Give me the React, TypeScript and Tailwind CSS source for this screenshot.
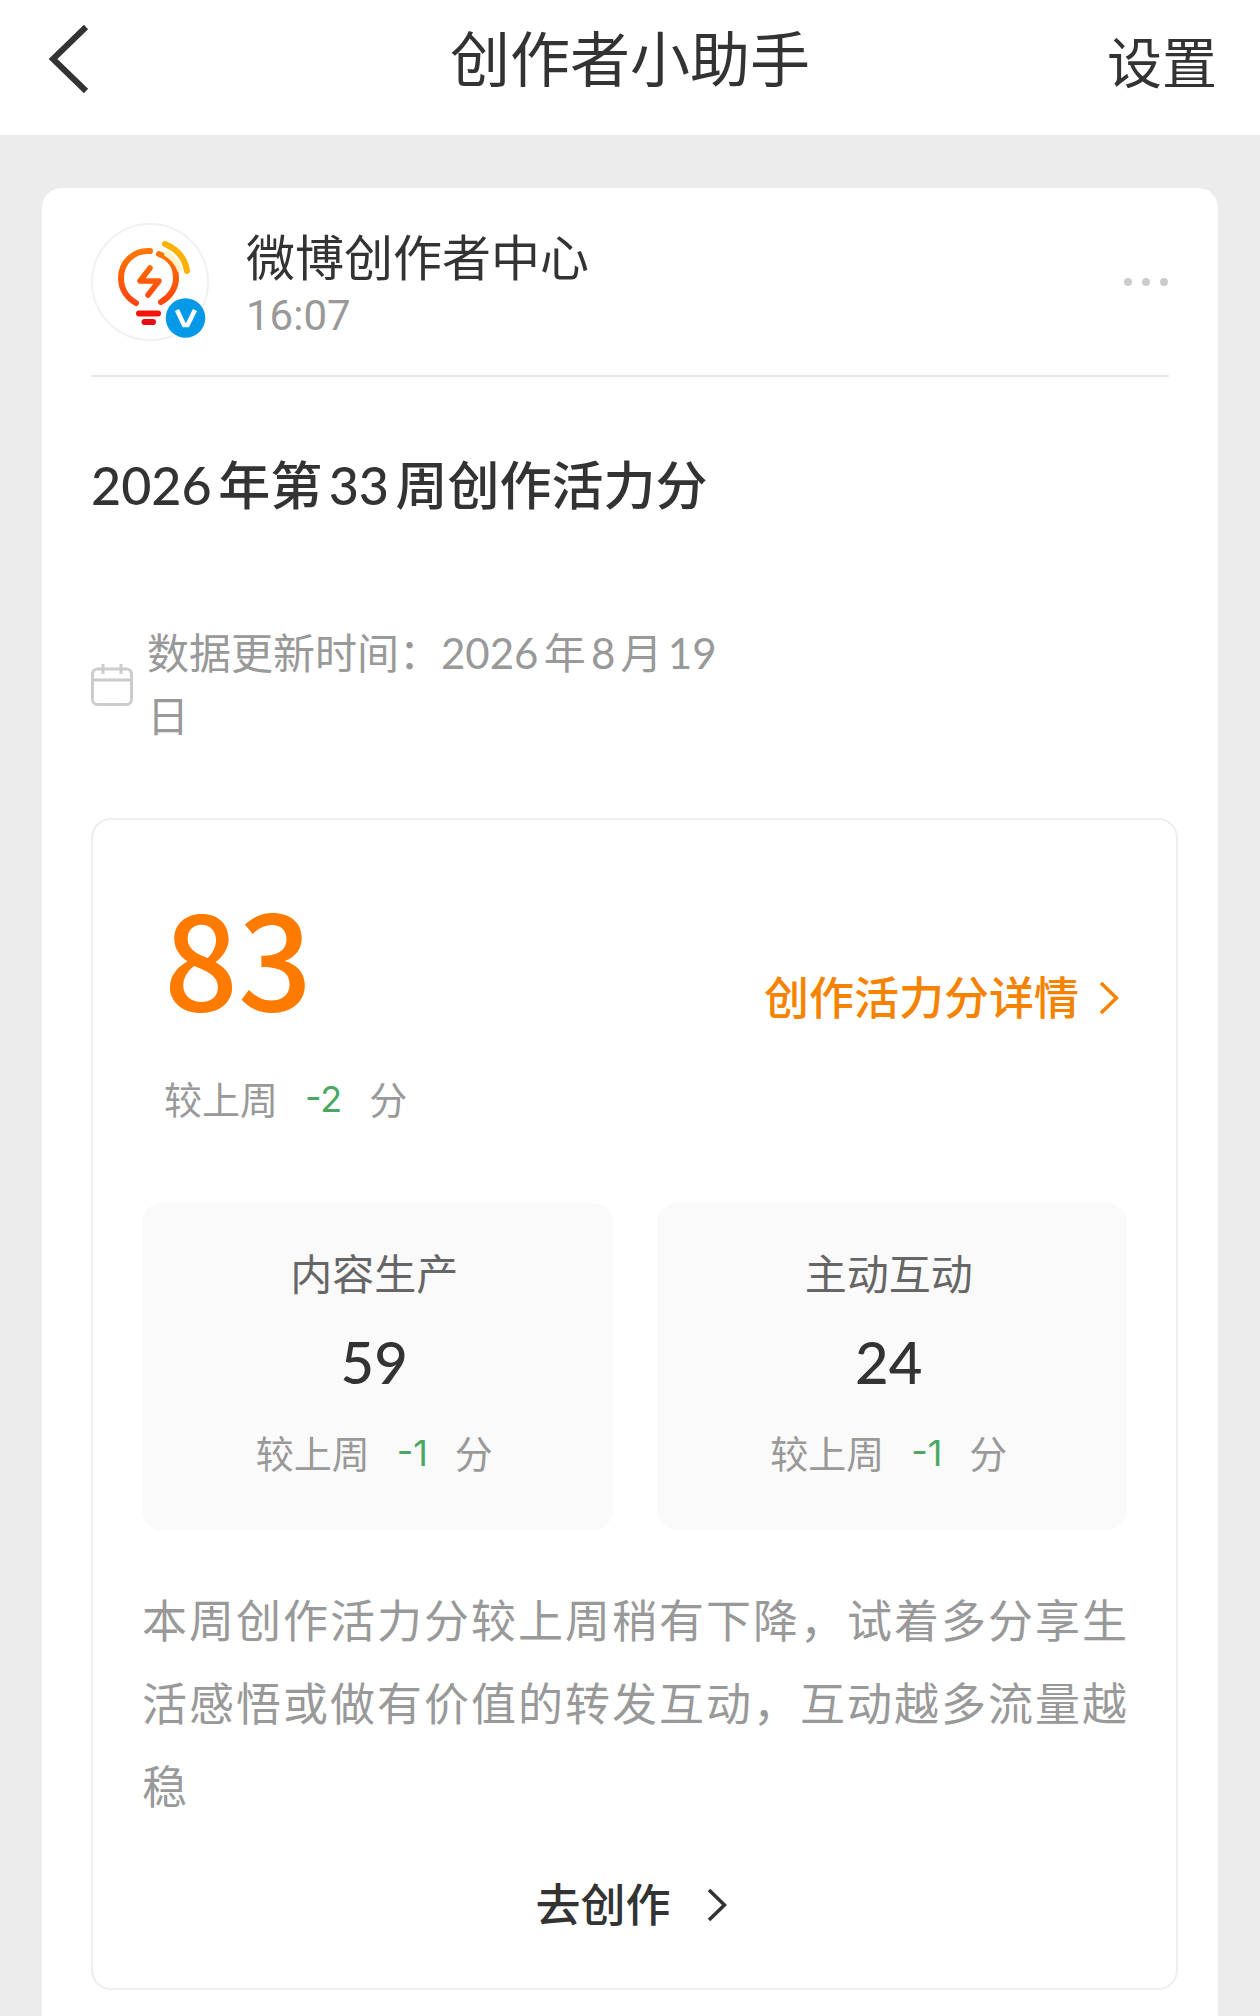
import React from "react";

function ChevronRight({ className }: { className?: string }) {
  return (
    <svg viewBox="0 0 20 34" className={className} fill="none" aria-hidden="true">
      <path d="M2 2 L17.5 17 L2 32" stroke="currentColor" strokeWidth="3.6" />
    </svg>
  );
}

function Avatar() {
  return (
    <svg viewBox="0 0 118 118" className="size-[118px] shrink-0" fill="none" role="img" aria-label="微博创作者中心">
      <defs>
        <linearGradient id="bulb" x1="0" y1="24" x2="0" y2="82" gradientUnits="userSpaceOnUse">
          <stop offset="0" stopColor="#ff7a00" />
          <stop offset="1" stopColor="#ff4310" />
        </linearGradient>
      </defs>
      <circle cx="59" cy="59" r="58" fill="#fff" stroke="#f1f1f1" strokeWidth="2" />
      <g stroke="url(#bulb)" strokeWidth="6" strokeLinecap="round" strokeLinejoin="round">
        <path d="M59 28 C43 27 30 39 30 55 C30 66 36 75 45 80" />
        <path d="M68 31 C79 35 85 44 85 55 C85 65 79 74 70 79" />
        <path d="M59 45 L49 58 L68 58 L57 72" strokeWidth="5.500" />
      </g>
      <path d="M74 30 Q85 36 89 48" stroke="#fff1c9" strokeWidth="5" />
      <path d="M74 21 C86 26 94 35 96 48" stroke="#ffb100" strokeWidth="6" strokeLinecap="round" />
      <path d="M48 90.500 H67" stroke="#f5130c" strokeWidth="6" strokeLinecap="round" />
      <path d="M53.500 99 H62" stroke="#e80d14" strokeWidth="6" strokeLinecap="round" />
      <circle cx="94.500" cy="95" r="21.500" fill="#fff" />
      <circle cx="94.500" cy="95" r="19.800" fill="#0599e8" />
      <path d="M86 87 L93 102 H96.500 L104 87" stroke="#fff" strokeWidth="4.500" />
    </svg>
  );
}

function CalendarIcon() {
  return (
    <svg viewBox="0 0 42 42" className="size-[42px] shrink-0" fill="none" stroke="#cccccc" strokeWidth="3" aria-hidden="true">
      <rect x="1.500" y="5" width="39" height="35.500" rx="5" />
      <path d="M2 16 H40" />
      <path d="M12 0 V10 M30 0 V10" />
    </svg>
  );
}

function Delta({ value }: { value: string }) {
  return (
    <p className="flex gap-[27px] text-[38px] leading-[56px] text-[#999999]">
      <span>较上周</span>
      <span className="font-['Inter'] text-[36px] text-[#4aa862]">{value}</span>
      <span>分</span>
    </p>
  );
}

function StatCard({ label, value, delta }: { label: string; value: string; delta: string }) {
  return (
    <section className="flex flex-col items-center rounded-[20px] bg-[#fafafa] pt-[41px] pr-[6px] pb-[49px]">
      <h3 className="text-[42px] leading-[60px] text-[#666666]">{label}</h3>
      <p className="mt-[18px] text-[58px] leading-[80px] font-medium text-[#333333]">{value}</p>
      <div className="mt-[23px]">
        <Delta value={delta} />
      </div>
    </section>
  );
}

export default function App() {
  return (
    <div
      lang="zh-CN"
      className="flex min-h-screen flex-col bg-[#ececec] font-['Lato','Noto_Sans_CJK_SC',sans-serif] text-[#333333] [text-autospace:normal]"
    >
      <header className="grid h-[135px] grid-cols-[1fr_auto_1fr] items-center bg-white pr-[43px] pb-[18px] pl-[43px]">
        <button type="button" aria-label="返回" className="justify-self-start pl-[5px]">
          <svg viewBox="0 0 42 70" className="h-[70px] w-[42px]" fill="none" aria-hidden="true">
            <path d="M38 3 L5 35 L38 67" stroke="#333333" strokeWidth="6" />
          </svg>
        </button>
        <h1 className="text-[60px] leading-[80px]">创作者小助手</h1>
        <button type="button" className="justify-self-end pt-[6px] text-[55px] leading-[80px]">
          设置
        </button>
      </header>

      <main className="mx-[42px] mt-[53px] flex-1 rounded-t-[20px] bg-white px-[49px] pt-[35px] pb-[26px]">
        <div className="flex items-center border-b-2 border-[#e8e8e8] pb-[34px]">
          <Avatar />
          <div className="ml-[37px] flex-1">
            <p className="text-[49px] leading-[68px]">微博创作者中心</p>
            <time className="block font-['Roboto'] text-[42px] leading-[50px] text-[#999999]">16:07</time>
          </div>
          <button type="button" aria-label="更多">
            <svg viewBox="0 0 46 10" className="h-[10px] w-[46px]" fill="#cccccc" aria-hidden="true">
              <circle cx="5" cy="5" r="4" />
              <circle cx="23" cy="5" r="4" />
              <circle cx="41" cy="5" r="4" />
            </svg>
          </button>
        </div>

        <h2 className="mt-[68px] text-[52px] leading-[80px] font-medium">2026年第33周创作活力分</h2>

        <div className="mt-[97px] flex items-center gap-[14px]">
          <CalendarIcon />
          <p className="max-w-[580px] text-[42px] leading-[63px] text-[#999999]">数据更新时间：2026年8月19日</p>
        </div>

        <section className="mt-[70px] mr-[-9px] rounded-[20px] border-2 border-[#efefef] px-[49px] pt-[69px] pb-[53px]">
          <div className="flex items-center justify-between pr-2 pl-[22px]">
            <div>
              <p className="font-['Noto_Sans_CJK_SC',sans-serif] text-[130px] leading-[130px] font-medium text-[#ff7b00]">83</p>
              <div className="mt-[52px]">
                <Delta value="-2" />
              </div>
            </div>
            <a href="#detail" className="mb-5 flex items-center gap-[20px] text-[45px] leading-[60px] font-medium text-[#f58300]">
              创作活力分详情
              <ChevronRight className="h-[34px] w-[20px]" />
            </a>
          </div>

          <div className="mt-[76px] grid grid-cols-2 gap-[44px]">
            <StatCard label="内容生产" value="59" delta="-1" />
            <StatCard label="主动互动" value="24" delta="-1" />
          </div>

          <p className="mt-[50px] text-justify text-[45px] leading-[83px] text-[#999999]">
            本周创作活力分较上周稍有下降，试着多分享生活感悟或做有价值的转发互动，互动越多流量越稳
          </p>

          <a href="#create" className="mt-[46px] flex items-center justify-center gap-[36px] pr-[7px] text-[45px] leading-[60px] font-medium">
            去创作
            <ChevronRight className="h-[34px] w-[20px]" />
          </a>
        </section>
      </main>
    </div>
  );
}
